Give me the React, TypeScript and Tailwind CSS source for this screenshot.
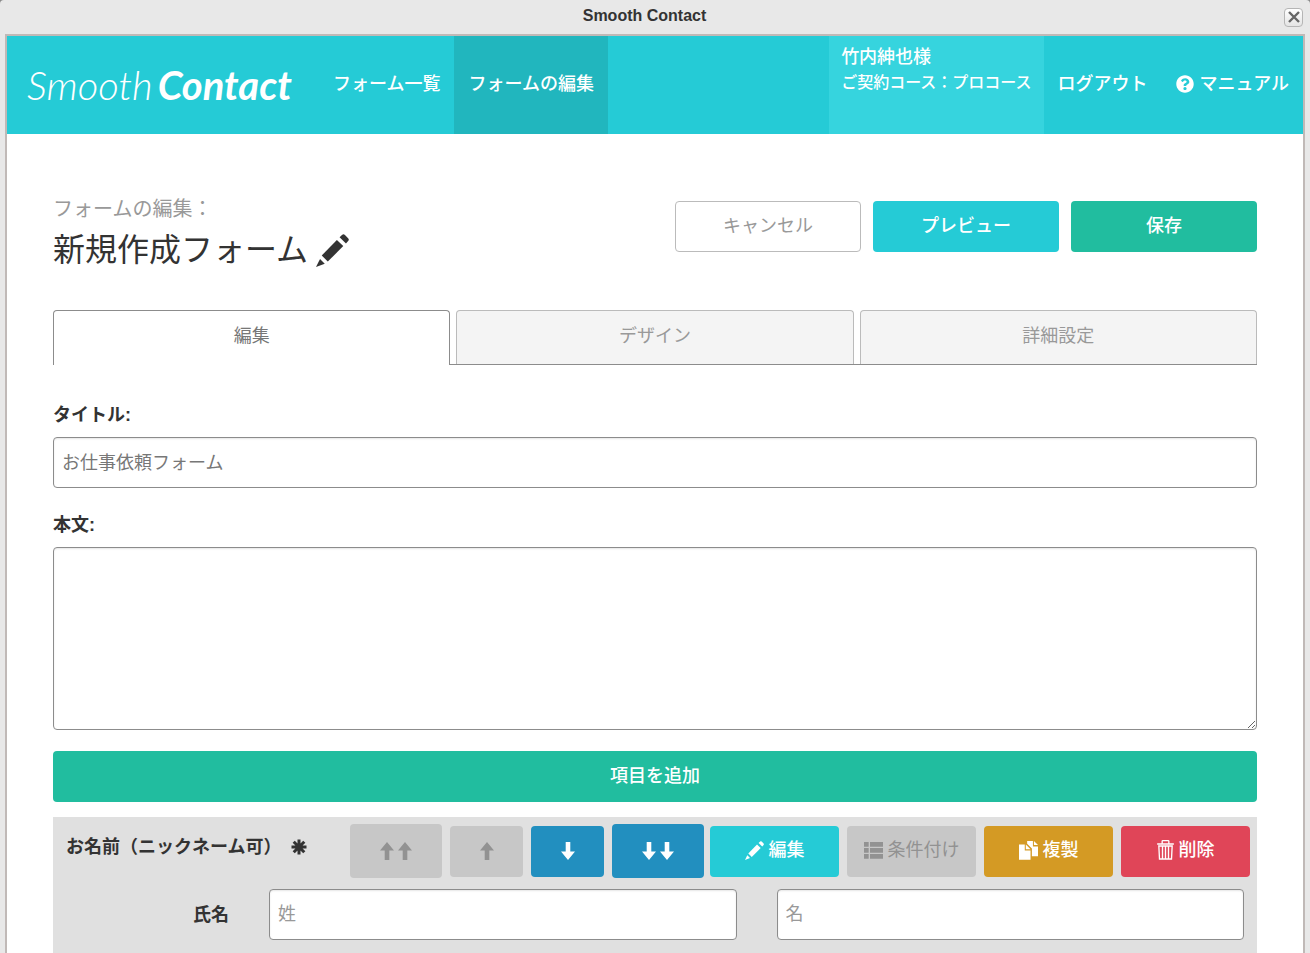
import React, { useState } from 'react';
import { FaQuestionCircle } from 'react-icons/fa';

const PencilIcon: React.FC<{ className?: string }> = ({ className }) => (
    <svg viewBox="0 0 98 98" fill="currentColor" className={className} aria-hidden="true">
        <path d="M0 98L12 74L26 88Z" />
        <path d="M62 18L81 36L35 82L17 64Z" />
        <path d="M70 10L78 2Q82 -1 86 3L96 13Q99 17 96 20L89 28Z" />
    </svg>
);

const ArrowIcon: React.FC<{ down?: boolean }> = ({ down }) => (
    <svg viewBox="0 0 14 18" fill="currentColor" className="h-[18px] w-[14px]" aria-hidden="true">
        {down ? (
            <path d="M4.7 0H9.3V9.5H14L7 18L0 9.5H4.7Z" />
        ) : (
            <path d="M4.7 18H9.3V8.5H14L7 0L0 8.5H4.7Z" />
        )}
    </svg>
);

const ListIcon: React.FC = () => (
    <svg viewBox="0 0 57 51" fill="currentColor" className="h-[17px] w-[19px]" aria-hidden="true">
        <path d="M0 0H14V14H0ZM18 0H57V14H18ZM0 18H14V32H0ZM18 18H57V32H18ZM0 36H14V50H0ZM18 36H57V50H18Z" />
    </svg>
);

const CopyIcon: React.FC = () => (
    <svg viewBox="0 0 56 56" fill="currentColor" className="h-[19px] w-[19px]" aria-hidden="true">
        <path d="M0 10H17V28H34V55H0Z" />
        <path d="M20 10L34 24H20Z" />
        <path d="M24 0H41V16H56V45H38V22L24 8Z" />
        <path d="M44 0L56 12H44Z" />
    </svg>
);

const TrashIcon: React.FC = () => (
    <svg viewBox="0 0 50 60" fill="none" stroke="currentColor" strokeWidth="4" className="h-[20px] w-[17px]" aria-hidden="true">
        <path d="M0 12H50M15 11V4Q15 2 17 2H33Q35 2 35 4V11" />
        <path d="M5 18H45L43 57H7ZM16 20V55M25 20V55M34 20V55" />
    </svg>
);

const AsteriskIcon: React.FC = () => (
    <svg viewBox="0 0 16 16" stroke="currentColor" strokeWidth="3" className="h-4 w-4" aria-hidden="true">
        <path d="M8 0.5V15.5M0.5 8H15.5M2.7 2.7L13.3 13.3M13.3 2.7L2.7 13.3" />
    </svg>
);

const actionClass = 'flex h-[51px] w-[129px] items-center justify-center gap-[5px] rounded pb-[2px] text-lg';
const inputClass =
    'h-[51px] rounded border border-[#8c8c8c] bg-white px-2 text-lg text-[#777] shadow-[inset_0_1px_2px_rgba(0,0,0,0.1)] placeholder:text-[#999]';

const App: React.FC = () => {
    const [tab, setTab] = useState('編集');

    return (
        <div className="bg-[#888]">
            <div className="flex min-h-screen flex-col rounded-t-[4px] bg-[#e8e8e8] px-[5px] font-['Liberation_Sans','Noto_Sans_CJK_JP',sans-serif] text-[#333]">
                {/* Window title bar */}
                <div className="flex h-[34px] items-center pr-[2px]">
                    <h1 className="flex-1 pb-[3px] text-center text-base font-bold">Smooth Contact</h1>
                    <button
                        aria-label="Close"
                        className="flex h-[19px] w-[19px] items-center justify-center rounded-[4px] border border-[#b5b5b5] bg-gradient-to-b from-white to-[#e4e4e4]"
                    >
                        <svg viewBox="0 0 12 12" className="h-3 w-3" stroke="#666" strokeWidth="2.4">
                            <path d="M1 1L11 11M11 1L1 11" />
                        </svg>
                    </button>
                </div>

                <div className="flex flex-1 flex-col border-2 border-b-0 border-[#c0b9b7] bg-white">
                    <header className="flex h-[98px] whitespace-nowrap bg-[#25cbd6] text-lg font-medium text-white">
                        <a href="#" className="flex w-[312px] items-center gap-[5px] pl-5 font-['Lato',sans-serif] text-[40px] italic leading-none">
                            <span className="font-light">Smooth</span>
                            <span className="font-bold">Contact</span>
                        </a>
                        <a href="#" className="flex items-center px-[14px] pb-[2px]">フォーム一覧</a>
                        <a href="#" className="flex items-center bg-[#21b6be] px-[14px] pb-[2px]">フォームの編集</a>
                        <div className="ml-auto bg-[#36d4de] px-3 pt-2">
                            <p className="leading-[26px]">竹内紳也様</p>
                            <p className="text-base leading-[26px]">ご契約コース：プロコース</p>
                        </div>
                        <a href="#" className="flex items-center px-[14px] pb-[2px]">ログアウト</a>
                        <a href="#" className="flex items-center gap-[6px] px-[14px] pb-[2px]">
                            <FaQuestionCircle size={18} />
                            マニュアル
                        </a>
                    </header>

                    <main className="flex flex-1 flex-col px-[46px] pt-[60px]">
                        <div className="flex items-start justify-between">
                            <div>
                                <p className="text-xl leading-[30px] text-[#999]">フォームの編集：</p>
                                <h2 className="flex items-center gap-2 text-[32px] leading-[52px]">
                                    新規作成フォーム
                                    <button aria-label="フォーム名を編集">
                                        <PencilIcon className="h-[33px] w-[33px]" />
                                    </button>
                                </h2>
                            </div>
                            <div className="mt-[7px] flex gap-3 text-lg">
                                <button className="h-[51px] w-[186px] rounded border border-[#bbb] bg-white pb-[2px] text-[#999]">キャンセル</button>
                                <button className="h-[51px] w-[186px] rounded bg-[#25cbd6] pb-[2px] font-medium text-white">プレビュー</button>
                                <button className="h-[51px] w-[186px] rounded bg-[#21bd9f] pb-[2px] font-medium text-white">保存</button>
                            </div>
                        </div>

                        {/* Tabs */}
                        <div className="mt-[34px] flex text-lg">
                            {['編集', 'デザイン', '詳細設定'].map((name, i) => (
                                <div key={name} className={`flex flex-1 ${i > 0 ? 'pl-[6px]' : ''} ${tab === name ? '' : 'border-b border-[#8c8c8c]'}`}>
                                    <button
                                        onClick={() => setTab(name)}
                                        className={`flex-1 rounded-t border border-b-0 ${tab === name
                                            ? 'h-[55px] border-[#8c8c8c] bg-white pb-1 text-[#777]'
                                            : 'h-[54px] border-[#bbb] bg-[#f4f4f4] pb-[3px] text-[#999]'
                                            }`}
                                    >
                                        {name}
                                    </button>
                                </div>
                            ))}
                        </div>

                        <label htmlFor="title" className="mt-9 text-lg font-bold leading-[28px]">タイトル:</label>
                        <input id="title" defaultValue="お仕事依頼フォーム" className={`${inputClass} mt-2 w-full pb-1`} />

                        <label htmlFor="body" className="mt-[23px] text-lg font-bold leading-[28px]">本文:</label>
                        <textarea
                            id="body"
                            className="mt-2 h-[183px] w-full resize rounded border border-[#8c8c8c] bg-white p-2 text-lg shadow-[inset_0_1px_2px_rgba(0,0,0,0.1)]"
                        />

                        <button className="mt-[21px] h-[51px] w-full shrink-0 rounded bg-[#21bd9f] pb-[2px] text-lg font-medium text-white">
                            項目を追加
                        </button>

                        {/* Form item */}
                        <section className="mt-[15px] flex-1 bg-[#e0e0e0] pb-[13px] pl-[13px] pr-[7px] pt-[7px]">
                            <div className="flex justify-between">
                                <h3 className="flex items-center gap-[10px] self-start whitespace-nowrap pt-[9px] text-lg font-bold leading-[28px]">
                                    お名前（ニックネーム可）
                                    <AsteriskIcon />
                                </h3>
                                <div className="flex items-center gap-[6px]">
                                    <div className="flex items-center gap-2">
                                        <button disabled aria-label="一番上へ" className="flex h-[54px] w-[92px] items-center justify-center gap-1 rounded bg-[#c7c7c7] text-[#929292]">
                                            <ArrowIcon />
                                            <ArrowIcon />
                                        </button>
                                        <button disabled aria-label="上へ" className="flex h-[51px] w-[73px] items-center justify-center rounded bg-[#c7c7c7] text-[#929292]">
                                            <ArrowIcon />
                                        </button>
                                        <button aria-label="下へ" className="flex h-[51px] w-[73px] items-center justify-center rounded bg-[#228fbf] text-white">
                                            <ArrowIcon down />
                                        </button>
                                        <button aria-label="一番下へ" className="flex h-[54px] w-[92px] items-center justify-center gap-1 rounded bg-[#228fbf] text-white">
                                            <ArrowIcon down />
                                            <ArrowIcon down />
                                        </button>
                                    </div>
                                    <div className="flex gap-2">
                                        <button className={`${actionClass} bg-[#25cbd6] font-medium text-white`}>
                                            <PencilIcon className="h-[19px] w-[19px]" />
                                            編集
                                        </button>
                                        <button disabled className={`${actionClass} bg-[#c7c7c7] text-[#929292]`}>
                                            <ListIcon />
                                            条件付け
                                        </button>
                                        <button className={`${actionClass} bg-[#d49a24] font-medium text-white`}>
                                            <CopyIcon />
                                            複製
                                        </button>
                                        <button className={`${actionClass} bg-[#e04558] font-medium text-white`}>
                                            <TrashIcon />
                                            削除
                                        </button>
                                    </div>
                                </div>
                            </div>

                            <div className="mt-[11px] flex items-center pr-[6px]">
                                <label htmlFor="sei" className="w-[203px] pr-10 text-right text-lg font-bold">氏名</label>
                                <div className="flex flex-1 gap-10">
                                    <input id="sei" placeholder="姓" className={`${inputClass} min-w-0 flex-1`} />
                                    <input aria-label="名" placeholder="名" className={`${inputClass} min-w-0 flex-1`} />
                                </div>
                            </div>
                        </section>
                    </main>
                </div>
            </div>
        </div>
    );
};

export default App;
